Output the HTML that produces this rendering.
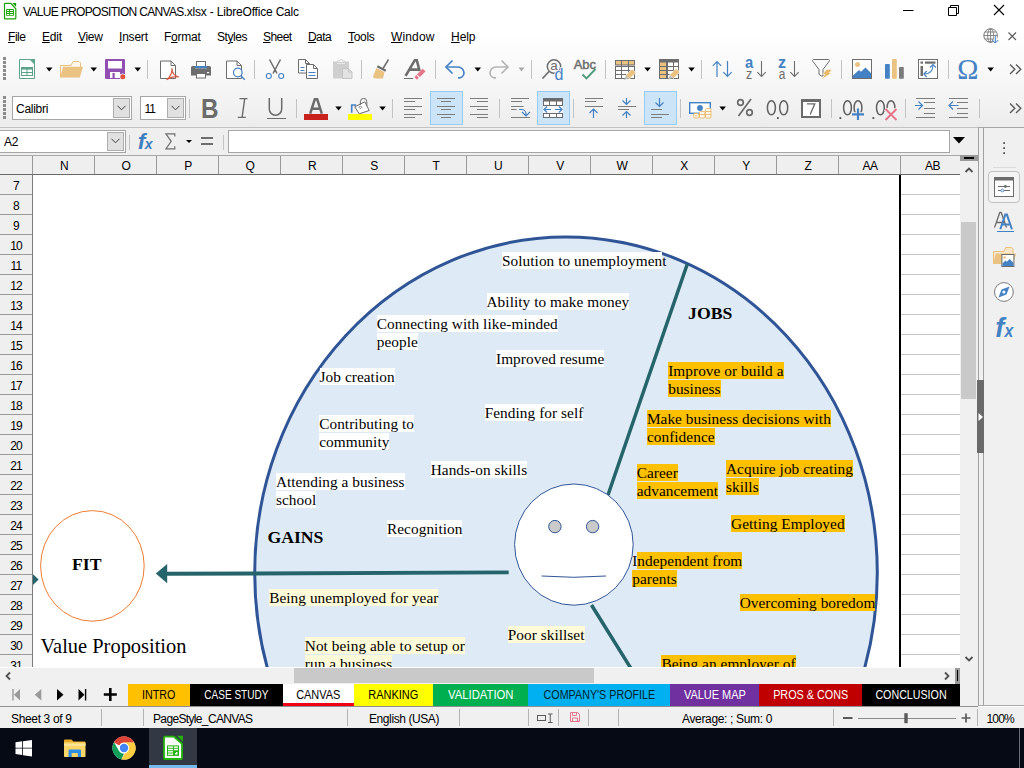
<!DOCTYPE html>
<html lang="en">
<head>
<meta charset="utf-8">
<title>VALUE PROPOSITION CANVAS.xlsx - LibreOffice Calc</title>
<style>
*{box-sizing:border-box;margin:0;padding:0}
html,body{width:1024px;height:768px;overflow:hidden;background:#fff}
body{position:relative;font-family:"Liberation Sans",sans-serif;font-size:12px;color:#000}
.abs{position:absolute}
.t{position:absolute;white-space:nowrap;line-height:14px;height:14px}
u{text-decoration:underline;text-underline-offset:1px}
svg{position:absolute;overflow:visible}
#titlebar{position:absolute;left:0;top:0;width:1024px;height:24px;background:#fff}
#menubar{position:absolute;left:0;top:24px;width:1024px;height:26px;background:linear-gradient(#fff 0%,#fff 40%,#fcfcfc 100%)}
#toolbars{position:absolute;left:0;top:50px;width:1024px;height:78px;background:linear-gradient(#fcfcfc 0%,#f8f8f8 30%,#f2f2f2 70%,#ececec 100%)}
#formulabar{position:absolute;left:0;top:127px;width:978px;height:28px;background:#efefef;border-top:1px solid #c2c2c2}
#sheet{position:absolute;left:0;top:155px;width:960px;height:512px;background:#fff;overflow:hidden}
#colhdr{position:absolute;left:0;top:0;width:960px;height:20px;background:#efefef;border-top:1px solid #a8a8a8;border-bottom:1px solid #6a6a6a}
.ch{position:absolute;top:0;height:18px;width:62px;border-left:1px solid #9a9a9a;text-align:center;line-height:20px;font-size:12px;padding-left:1px;letter-spacing:-0.5px}
#rowhdr{position:absolute;left:0;top:20px;width:33px;height:492px;background:#efefef;border-right:1px solid #7c7c7c}
.rh{position:absolute;left:0;width:32px;height:20px;border-bottom:1px solid #9a9a9a;text-align:center;line-height:23px;font-size:12px;letter-spacing:-0.8px}
#cells{position:absolute;left:33px;top:20px;width:927px;height:492px;background:#fff;overflow:hidden}
.serif{font-family:"Liberation Serif",serif}
.sep{position:absolute;width:1px;background:#c4c4c4}
.dd{position:absolute;width:0;height:0;border-left:3.5px solid transparent;border-right:3.5px solid transparent;border-top:4px solid #000}
.hl{position:absolute;background:#cde4f7;border:1px solid #92c0e8}
.grip{position:absolute;width:4px;background-image:repeating-linear-gradient(#8c8c8c 0,#8c8c8c 2px,transparent 2px,transparent 4px)}
.lab{position:absolute;white-space:nowrap;font-family:"Liberation Serif",serif;font-size:15.3px;line-height:18px;color:#000;letter-spacing:0.06px}
.lab span{background:#fff}
.lab.y span{background:#fffbd9}
.lab.o span{background:#ffc000}
.hd{position:absolute;white-space:nowrap;font-family:"Liberation Serif",serif;font-weight:bold;font-size:17.7px;line-height:20px}
.tab{position:absolute;top:684px;height:22px;text-align:center;line-height:23px;font-size:12px;white-space:nowrap}
.sb{position:absolute;top:712px;white-space:nowrap;line-height:14px}
</style>
</head>
<body>
<div id="titlebar">
<svg style="left:0;top:0" width="20" height="24" viewBox="0 0 20 24">
<path d="M5.100 3.400h5.700l5 5.400v9.400a0.600 0.600 0 0 1-0.600 0.600h-10.100a0.600 0.600 0 0 1-0.600-0.600v-14.200a0.600 0.600 0 0 1 0.600-0.600z" fill="#fff" stroke="#18a303" stroke-width="1.200"/>
<path d="M12.200 2.900h3.900v4z" fill="#18a303"/>
<rect x="6.100" y="8.900" width="7.800" height="6.900" rx="0.500" fill="#18a303"/>
<path d="M7 10.500h2.100M9.900 10.500h3.100M7 12.500h2.100M9.900 12.500h3.100M7 14.500h2.100M9.900 14.500h3.100" stroke="#fff" stroke-width="1"/>
</svg>
<div class="t" style="left:23px;top:5px;letter-spacing:-0.19px"><span style="letter-spacing:-0.68px">VALUE PROPOSITION CANVAS</span>.xlsx - LibreOffice Calc</div>
<svg style="left:903px;top:4px" width="104" height="14" viewBox="0 0 104 14">
<path d="M0 6.5h10.5" stroke="#000" stroke-width="1"/>
<path d="M45.500 3.500h8v8h-8z M47.500 3.500v-2h8v8h-2" fill="none" stroke="#000" stroke-width="1"/>
<path d="M91 1l10 10M101 1l-10 10" stroke="#000" stroke-width="1.100"/>
</svg>
</div>
<div id="menubar">
<div class="t" style="left:8px;top:6px;letter-spacing:-0.46px"><u>F</u>ile</div>
<div class="t" style="left:42px;top:6px;letter-spacing:-0.23px"><u>E</u>dit</div>
<div class="t" style="left:78px;top:6px;letter-spacing:-0.32px"><u>V</u>iew</div>
<div class="t" style="left:119px;top:6px;letter-spacing:-0.21px"><u>I</u>nsert</div>
<div class="t" style="left:164px;top:6px;letter-spacing:-0.25px">F<u>o</u>rmat</div>
<div class="t" style="left:217px;top:6px;letter-spacing:-0.45px">St<u>y</u>les</div>
<div class="t" style="left:263px;top:6px;letter-spacing:-0.57px"><u>S</u>heet</div>
<div class="t" style="left:308px;top:6px;letter-spacing:-0.59px"><u>D</u>ata</div>
<div class="t" style="left:348px;top:6px;letter-spacing:-0.3px"><u>T</u>ools</div>
<div class="t" style="left:391px;top:6px;letter-spacing:0.14px"><u>W</u>indow</div>
<div class="t" style="left:451px;top:6px;letter-spacing:-0.05px"><u>H</u>elp</div>
<svg style="left:983px;top:4px" width="34" height="18" viewBox="0 0 34 18">
<circle cx="7.600" cy="7.500" r="6.800" fill="none" stroke="#7a7a7a" stroke-width="1"/>
<ellipse cx="7.600" cy="7.500" rx="3" ry="6.800" fill="none" stroke="#7a7a7a" stroke-width="0.900"/>
<path d="M0.800 7.500h13.600M2 4h11.200M2 11h11.200M7.600 0.700v13.600" stroke="#7a7a7a" stroke-width="0.900"/>
<path d="M12.300 8v7" stroke="#fff" stroke-width="3"/>
<path d="M12.300 8v7M9.300 12l3 3 3-3" fill="none" stroke="#3a7fc4" stroke-width="1"/>
<path d="M25.500 4.500l7.500 7.500M33 4.500l-7.500 7.500" stroke="#5a5a5a" stroke-width="1.100"/>
</svg>
</div>
<div id="toolbars">
<svg style="left:0;top:0" width="1024" height="78" viewBox="0 50 1024 78" font-family="Liberation Sans,sans-serif">
<!-- grips -->
<g fill="#8c8c8c">
<path d="M3 57h3v3h-3zM3 61h3v3h-3zM3 65h3v3h-3zM3 69h3v3h-3zM3 73h3v3h-3zM3 77h3v3h-3z"/>
<path d="M3 96h3v3h-3zM3 100h3v3h-3zM3 104h3v3h-3zM3 108h3v3h-3zM3 112h3v3h-3zM3 116h3v3h-3z"/>
</g>
<!-- separators row1 -->
<g stroke="#c3c3c3" stroke-width="1">
<path d="M147.5 60v19M254.5 60v19M361.5 60v19M435.5 60v19M531.5 60v19M605.5 60v19M701.5 60v19M841.5 60v19M948.5 60v19"/>
<path d="M189.5 99v19M296.5 99v19M392.5 99v19M499.5 99v19M573.5 99v19M680.5 99v19M831.5 99v19M905.5 99v19M979.5 99v19"/>
</g>
<!-- dropdown arrows -->
<g fill="#000">
<path d="M46 67.5h6.5l-3.25 4zM90.5 67.5h6.5l-3.25 4zM134.5 67.5h6.5l-3.25 4zM474.5 67.5h6.5l-3.25 4zM644.3 67.5h6.5l-3.25 4zM688.3 67.5h6.5l-3.25 4zM987.4 67.5h6.5l-3.25 4z"/>
<path d="M335.3 106.5h6.5l-3.25 4zM379.3 106.5h6.5l-3.25 4zM719.4 106.5h6.5l-3.25 4z"/>
</g>
<path d="M518.5 67.5h6l-3 4z" fill="#a8a8a8"/>
<!-- New spreadsheet -->
<g transform="translate(19,59)">
<path d="M0.5 0.5h10.5l4.5 4.5v14.5h-15z" fill="#fff" stroke="#5ea387" stroke-width="1"/>
<path d="M10.5 0l5.5 5.5v-5.5z" fill="#5ea387"/>
<rect x="2.5" y="8.5" width="11" height="8" fill="#fff" stroke="#5ea387" stroke-width="1"/>
<rect x="2" y="8" width="12" height="2.6" fill="#5ea387"/>
<path d="M2.5 13.5h11M8 10v6.5" stroke="#5ea387" stroke-width="1"/>
</g>
<!-- Open -->
<g transform="translate(60,61)">
<path d="M0.5 16V4.5h10.5l2-4h6l1.500 1.500v4" fill="#fdf8ee" stroke="#e9c17f" stroke-width="1"/>
<path d="M0 16.500l3.200-10.700h19.800l-3.200 10.700z" fill="#eac282"/>
</g>
<!-- Save -->
<g transform="translate(105,59)">
<path d="M0 1a1 1 0 0 1 1-1h18a1 1 0 0 1 1 1v18a1 1 0 0 1-1 1h-18a1 1 0 0 1-1-1z" fill="#9150b1"/>
<rect x="3" y="2" width="14" height="7.5" fill="#fff"/>
<rect x="5" y="13" width="10" height="6" fill="#fff"/>
<rect x="7.5" y="14" width="2.2" height="5" fill="#9150b1"/>
<circle cx="17.6" cy="17.6" r="3.1" fill="#f9f4fb"/>
<circle cx="17.8" cy="17.8" r="2.5" fill="#e0533a"/>
</g>
<!-- PDF -->
<g transform="translate(160,60.5)">
<path d="M0.5 0.5h10.5l4.5 4.5v13h-15z" fill="#fff" stroke="#6d6d6d" stroke-width="1"/>
<path d="M11 0.5v4.5h4.5" fill="none" stroke="#6d6d6d" stroke-width="1"/>
<path d="M7 19c3-2.500 5-7 5-11c0 4.500 2.500 7.500 6.500 8.500c-4.500-1-8.500 0.500-11.500 2.500z" fill="none" stroke="#d65a44" stroke-width="1.2" stroke-linejoin="round"/>
</g>
<!-- Print -->
<g transform="translate(191,61)">
<rect x="5.500" y="0.500" width="9" height="6" fill="#fff" stroke="#6d6d6d" stroke-width="1"/>
<rect x="4" y="5" width="12" height="2.500" fill="#4582c3"/>
<path d="M0 6.500a1.500 1.500 0 0 1 1.500-1.500h2.500v2.500h12v-2.500h2.500a1.500 1.500 0 0 1 1.500 1.500v8h-20z" fill="#6d6d6d"/>
<rect x="5.500" y="12.500" width="9" height="4.500" fill="#fff" stroke="#6d6d6d" stroke-width="1"/>
<rect x="16" y="11" width="2.200" height="1.200" fill="#fff"/>
</g>
<!-- Preview -->
<g transform="translate(226,60.5)">
<path d="M0.5 0.5h10.5l4.5 4.5v13h-15z" fill="#fff" stroke="#6d6d6d" stroke-width="1"/>
<path d="M11 0.5v4.500h4.500" fill="none" stroke="#6d6d6d" stroke-width="1"/>
<circle cx="11.800" cy="12" r="4.300" fill="#fff" stroke="#4582c3" stroke-width="1.200"/>
<path d="M14.800 15.200l4 4" stroke="#4582c3" stroke-width="1.300"/>
</g>
<!-- Cut -->
<g transform="translate(266,59)" fill="none">
<path d="M3.500 0.500l7.500 14M14.500 0.500l-7.500 14" stroke="#6d6d6d" stroke-width="1.500"/>
<path d="M9 9.500l-1.800 3.500h3.600z" fill="#6d6d6d"/>
<circle cx="2.800" cy="17" r="2.500" stroke="#4582c3" stroke-width="1.100"/>
<circle cx="15.200" cy="17" r="2.500" stroke="#4582c3" stroke-width="1.100"/>
</g>
<!-- Copy -->
<g transform="translate(298,59)">
<path d="M0.500 0.500h7l4 4v9.500h-11z" fill="#fff" stroke="#6d6d6d" stroke-width="1"/>
<path d="M7.500 0.500v4h4" fill="none" stroke="#6d6d6d" stroke-width="1"/>
<path d="M2.500 8.500h4M2.500 11.500h4" stroke="#4582c3" stroke-width="1"/>
<path d="M8.500 5.500h7l4 4v10h-11z" fill="#fff" stroke="#6d6d6d" stroke-width="1"/>
<path d="M15.500 5.500v4h4" fill="none" stroke="#6d6d6d" stroke-width="1"/>
<path d="M10.500 13.500h7M10.500 16.500h7" stroke="#4582c3" stroke-width="1"/>
</g>
<!-- Paste (disabled) -->
<g transform="translate(333,59)">
<path d="M0 2.500h4v2h8v-2h4v17h-16z" fill="#cfcfcf"/>
<path d="M4.500 3.500v-1.500h2a1.500 1.500 0 0 1 3 0h2v1.500z" fill="none" stroke="#cfcfcf" stroke-width="1"/>
<path d="M9.500 9.500h6l3.500 3.500v6.500h-9.500z" fill="#e3e3e3" stroke="#c4c4c4" stroke-width="1"/>
<path d="M15.500 9.500v3.500h3.500" fill="none" stroke="#c4c4c4" stroke-width="1"/>
</g>
<!-- Clone formatting brush -->
<g transform="translate(373,59)">
<path d="M15.500 0.500l-5.500 9" stroke="#6d6d6d" stroke-width="1.500"/>
<path d="M4.800 6.200l8.500 4.500-1 2-8.500-4.500z" fill="#6d6d6d"/>
<path d="M3.500 9l8 4.300-1.500 6.200h-7.500c-2 0-3-1.500-2-3.500z" fill="#eac282"/>
</g>
<!-- Clear formatting -->
<g transform="translate(404,59)">
<path d="M1.600 16.800l9.200-15.600h2l2.800 10.800M5.600 10.600h9.200" fill="none" stroke="#6d6d6d" stroke-width="2.600" stroke-linejoin="miter"/>
<path d="M0 19.500h9.200" stroke="#6d6d6d" stroke-width="1"/>
<path d="M12.900 15.400l5.600-5.650 3.100 2.500-5.600 5.650z" fill="#e6758a"/>
<path d="M10.400 17.900l2.100-1.900 2.250 3.100-1.850 1.650z" fill="#e6758a"/>
</g>
<!-- Undo -->
<g transform="translate(445,60)" fill="none" stroke="#4582c3" stroke-width="1.700">
<path d="M7.500 0.500l-6.500 6.500 6.500 6.500"/>
<path d="M1.500 7h11.500a6 6 0 0 1 6 6a5 5 0 0 1-5 4.800h-1"/>
</g>
<!-- Redo (disabled) -->
<g transform="translate(489,60)" fill="none" stroke="#b4b4b4" stroke-width="1.700">
<path d="M12.500 0.500l6.500 6.500-6.500 6.500"/>
<path d="M18.500 7h-11.500a6 6 0 0 0-6 6a5 5 0 0 0 5 4.800h1"/>
</g>
<!-- Find & Replace -->
<g transform="translate(542,59)">
<circle cx="12" cy="7.500" r="6.700" fill="none" stroke="#6d6d6d" stroke-width="1.500"/>
<path d="M7 12.500l-6.500 7" stroke="#6d6d6d" stroke-width="1.700"/>
<text x="8.200" y="11" font-size="13.500" fill="#6d6d6d">a</text>
<text x="12.400" y="20.700" font-size="16" fill="#4582c3" stroke="#f6f6f6" stroke-width="1.600" paint-order="stroke">d</text>
</g>
<!-- Spelling -->
<g transform="translate(574,59)">
<text x="-0.300" y="9.800" font-size="12.300" fill="#6d6d6d" stroke="#6d6d6d" stroke-width="0.450" textLength="22.300" lengthAdjust="spacingAndGlyphs">Abc</text>
<path d="M8.500 15.500l4 4 9-9.500" fill="none" stroke="#4f9d7d" stroke-width="1.900"/>
</g>
<!-- Row autoformat -->
<g transform="translate(615,60)">
<rect x="0.500" y="0.500" width="19" height="4.500" fill="#eac282" stroke="#6d6d6d" stroke-width="1"/>
<rect x="0.500" y="6.500" width="19" height="12" fill="#fff" stroke="#6d6d6d" stroke-width="1"/>
<path d="M6.500 0.500v18M13.500 0.500v18M0.500 10.500h19M0.500 14.500h19" stroke="#6d6d6d" stroke-width="1"/>
<path d="M17 9l4 3.500-6.500 6.500-4-3.500z" fill="#eac282" stroke="#fff" stroke-width="0.600"/>
<path d="M11 15.500l3 3-5 1.500z" fill="#bdbdbd"/>
</g>
<!-- Column autoformat -->
<g transform="translate(659,59)">
<rect x="0.500" y="0.500" width="7" height="19" fill="#eac282" stroke="#6d6d6d" stroke-width="1"/>
<rect x="8.500" y="0.500" width="11" height="19" fill="#fff" stroke="#6d6d6d" stroke-width="1"/>
<rect x="0" y="0" width="7.800" height="3.500" fill="#6d6d6d"/>
<rect x="9" y="0" width="11" height="3.500" fill="#6d6d6d"/>
<path d="M0.500 7.500h19M0.500 11.500h19M0.500 15.500h19M14.500 3v16" stroke="#6d6d6d" stroke-width="1"/>
<path d="M17 9.500l4 3.500-6.500 6.500-4-3.500z" fill="#eac282" stroke="#fff" stroke-width="0.600"/>
<path d="M11 16l3 3-5 1.500z" fill="#bdbdbd"/>
</g>
<!-- Sort -->
<g transform="translate(712,60)" fill="none" stroke="#4582c3" stroke-width="1.200">
<path d="M5 17v-15.500M0.800 5.800l4.200-4.300 4.200 4.300"/>
<path d="M15.500 1v15.500M11.300 12.200l4.200 4.300 4.200-4.300"/>
</g>
<!-- Sort asc -->
<g transform="translate(745,59)">
<text x="0" y="9.100" font-size="17" font-weight="bold" fill="#4582c3" textLength="8.200" lengthAdjust="spacingAndGlyphs">a</text>
<text x="1" y="19.700" font-size="14" fill="#6d6d6d" textLength="6.200" lengthAdjust="spacingAndGlyphs">z</text>
<path d="M16.500 2v15.500M12.300 13.200l4.200 4.300 4.200-4.300" fill="none" stroke="#6d6d6d" stroke-width="1.100"/>
</g>
<!-- Sort desc -->
<g transform="translate(778,59)">
<text x="0" y="9.100" font-size="17" font-weight="bold" fill="#4582c3" textLength="8" lengthAdjust="spacingAndGlyphs">z</text>
<text x="0.700" y="19.700" font-size="14" fill="#6d6d6d" textLength="6.600" lengthAdjust="spacingAndGlyphs">a</text>
<path d="M16.500 2v15.500M12.300 13.200l4.200 4.300 4.200-4.300" fill="none" stroke="#6d6d6d" stroke-width="1.100"/>
</g>
<!-- AutoFilter -->
<g transform="translate(812,59)">
<path d="M1.500 0.500h15a1 1 0 0 1 0.800 1.600l-6.300 8.400v6.500h-1.500l-2.500-1.500v-5l-6.300-8.400a1 1 0 0 1 0.800-1.600z" fill="none" stroke="#6d6d6d" stroke-width="1"/>
<path d="M14.500 10.500h5.500l-3 3.500h2.500l-10 6.500 3.500-5h-2.500z" fill="#eab864" stroke="#f6f6f6" stroke-width="0.500"/>
</g>
<!-- Image -->
<g transform="translate(852,59)">
<rect x="0.500" y="0.500" width="19" height="19" fill="#fff" stroke="#6d6d6d" stroke-width="1"/>
<circle cx="5.500" cy="5.500" r="2.500" fill="#eac282"/>
<path d="M1 19v-2.500l6-5.500 2 1.800 4.500-4.300 5.500 5.500v5z" fill="#4582c3"/>
</g>
<!-- Chart -->
<g transform="translate(885,59)">
<rect x="0" y="5" width="4.800" height="14.800" rx="0.800" fill="#4582c3"/>
<rect x="7" y="0" width="4.800" height="19.800" rx="0.800" fill="#eac282"/>
<rect x="14" y="8" width="4.800" height="11.800" rx="0.800" fill="#7a7a7a"/>
</g>
<!-- Pivot table -->
<g transform="translate(918,59)">
<rect x="0.500" y="0.500" width="19" height="19" fill="#fff" stroke="#6d6d6d" stroke-width="1"/>
<rect x="2.500" y="2.500" width="2.500" height="2.200" fill="#6d6d6d"/>
<rect x="7" y="2.500" width="10.500" height="2.200" fill="#6d6d6d"/>
<rect x="2.500" y="7" width="2.500" height="10" fill="#6d6d6d"/>
<path d="M15 6c0 6-3 9-9 9" fill="none" stroke="#4582c3" stroke-width="1.100"/>
<path d="M12 8.500l3-3 3 3M8.800 12l-3 3 3 3" fill="none" stroke="#4582c3" stroke-width="1.100"/>
</g>
<!-- Omega -->
<text x="957.300" y="78.500" font-family="Liberation Serif,serif" font-size="28.500" fill="#4582c3">Ω</text>
<!-- chevrons -->
<g fill="none" stroke="#5a5a5a" stroke-width="1.400">
<path d="M1010 64.500l4.800 4.700-4.800 4.700M1016 64.500l4.800 4.700-4.800 4.700"/>
<path d="M1010 103.500l4.800 4.700-4.800 4.700M1016 103.500l4.800 4.700-4.800 4.700"/>
</g>
<!-- highlights for active buttons -->
<g fill="#cce4f7" stroke="#98ccf5" stroke-width="1">
<rect x="430.500" y="91.500" width="32" height="33"/>
<rect x="537.500" y="91.500" width="32" height="33"/>
<rect x="644.500" y="91.500" width="32" height="33"/>
</g>
<!-- Bold Italic Underline -->
<text x="201" y="118" font-size="27" font-weight="bold" fill="#6b6b6b" textLength="17.500" lengthAdjust="spacingAndGlyphs">B</text>
<path d="M239.500 98.600h8M237.800 117.400h8M244.700 98.600l-2.600 18.800" fill="none" stroke="#6b6b6b" stroke-width="1.400"/>
<path d="M269.300 98v11a6.200 6.200 0 0 0 12.400 0v-11" fill="none" stroke="#6b6b6b" stroke-width="1.500"/>
<path d="M267 118.500h19" stroke="#6b6b6b" stroke-width="1"/>
<!-- Font color -->
<path d="M310.200 113.600l4.600-14.400h2.400l4.600 14.400M312.300 108.800h7.400" fill="none" stroke="#6b6b6b" stroke-width="2.500"/>
<rect x="304" y="114" width="24" height="6" fill="#c9211e"/>
<!-- Background color -->
<path d="M351.700 112.800v-7.800h4.500" fill="none" stroke="#4582c3" stroke-width="1.600"/>
<path d="M354.800 106.800l10-5 4.400 8.700-10 3.300z" fill="#fff" stroke="#6b6b6b" stroke-width="1"/>
<path d="M360.400 104.800v-3.200a3.200 3.200 0 0 1 6.400 0v4.600" fill="none" stroke="#6b6b6b" stroke-width="1"/>
<path d="M360.400 105.800l1.500 1.500-1.500 1.500-1.500-1.500z" fill="#fff" stroke="#6b6b6b" stroke-width="0.800"/>
<rect x="348" y="114" width="24" height="6" fill="#ffff00"/>
<!-- align left/center/right -->
<g stroke="#7d7d7d" stroke-width="1">
<path d="M404 98.500h18M404 101.500h11M404 106.500h18M404 109.500h11M404 114.500h18M404 117.500h11"/>
<path d="M437 98.500h18M441 101.500h10M437 106.500h18M441 109.500h10M437 114.500h18M441 117.500h10"/>
<path d="M470 98.500h18M477 101.500h11M470 106.500h18M477 109.500h11M470 114.500h18M477 117.500h11"/>
<!-- wrap -->
<path d="M511 98.500h18M511 101.500h11M511 106.500h12.500M511 109.500h5.500M511 117.500h19"/>
<!-- align top -->
<path d="M585 98.500h18M585 101.500h11M585 106.500h18"/>
<!-- center vert -->
<path d="M618 106.500h18M618 109.500h11"/>
<!-- bottom -->
<path d="M651 109.500h11M651 114.500h18M651 117.500h11"/>
<!-- indent inc -->
<path d="M916 98.500h19M924 102.500h11M924 108.500h11M924 113.500h11M916 117.500h19"/>
<!-- indent dec -->
<path d="M949 98.500h19M957 102.500h11M957 108.500h11M957 113.500h11M949 117.500h19"/>
</g>
<g fill="none" stroke="#4582c3" stroke-width="1.200">
<path d="M519 109.500h2.500a4.500 4.500 0 0 1 4.500 4.500v1.500M522 112l4 4 4-4"/>
<path d="M593.500 118v-9M589.500 113l4-4 4 4"/>
<path d="M626.500 98v6.500M622.500 100.500l4 4 4-4M626.500 118v-6.500M622.500 115.500l4-4 4 4"/>
<path d="M659.500 98v8.500M655.500 102.500l4 4 4-4"/>
<path d="M915 105.500h7.500M918.500 101.500l4 4-4 4"/>
<path d="M958.500 105.500h-9M953 101.500l-4 4 4 4"/>
</g>
<!-- merge cells -->
<g transform="translate(543,98)">
<rect x="0.500" y="0.500" width="19" height="19" fill="#fff" stroke="#6b6b6b" stroke-width="1"/>
<rect x="0" y="0" width="20" height="3.500" fill="#6b6b6b"/>
<path d="M0.500 7.500h19M0.500 15.500h19M6.500 3v4.500M13.500 3v4.500M6.500 15.500v4M13.500 15.500v4" stroke="#6b6b6b" stroke-width="1"/>
<rect x="0" y="8" width="20" height="7" fill="#f4f9fe"/>
<path d="M1 11.500h7M12 11.500h7M4 8.500l-3 3 3 3M16 8.500l3 3-3 3" fill="none" stroke="#4582c3" stroke-width="1.200"/>
</g>
<!-- currency -->
<g transform="translate(689,102)">
<rect x="0.700" y="0.700" width="20.600" height="10.600" fill="#fff" stroke="#4582c3" stroke-width="1.400"/>
<circle cx="11" cy="6" r="2.900" fill="#4582c3"/>
<g fill="#fdf6e9" stroke="#e9b96e" stroke-width="0.900">
<rect x="16.500" y="6.500" width="5.500" height="9.500" rx="1"/>
<path d="M16.500 9.500h5.500M16.500 12.500h5.500"/>
<rect x="10.500" y="9.500" width="5.500" height="6.500" rx="1"/>
<path d="M10.500 12.500h5.500"/>
<rect x="4.500" y="11.500" width="5.500" height="4.500" rx="1.500"/>
<path d="M6 13.800h2.500"/>
</g>
</g>
<!-- percent -->
<g fill="none" stroke="#6b6b6b" stroke-width="1.700">
<circle cx="740.500" cy="102.500" r="2.800"/><circle cx="749.500" cy="112.500" r="2.800"/><path d="M751 99l-12.500 17"/>
</g>
<!-- 0.0 -->
<g fill="none" stroke="#626262" stroke-width="1.500">
<ellipse cx="771.400" cy="107.750" rx="4" ry="7.100"/><ellipse cx="783.700" cy="107.750" rx="4" ry="7.100"/>
<ellipse cx="847.500" cy="107.750" rx="3.900" ry="7.100"/>
<ellipse cx="858" cy="107.750" rx="3.900" ry="7.100"/>
<ellipse cx="880.400" cy="107.750" rx="3.900" ry="7.100"/>
<ellipse cx="891" cy="107.750" rx="3.900" ry="7.100"/>
</g>
<g fill="#3c3c3c"><rect x="777" y="117.200" width="1.700" height="1.700"/><rect x="839.500" y="117.200" width="1.700" height="1.700"/><rect x="872.500" y="117.200" width="1.700" height="1.700"/></g>
<!-- number 7 box -->
<rect x="802" y="100" width="18" height="17" fill="#fff" stroke="#6b6b6b" stroke-width="2"/>
<rect x="801" y="99" width="20" height="3" fill="#6b6b6b"/>
<path d="M807 103.800h7.800l-4.600 10.700" fill="none" stroke="#6b6b6b" stroke-width="1.300"/>
<!-- plus & x -->
<path d="M858 108.500v11.500M852 114.300h12" stroke="#f1f1f1" stroke-width="4.200" fill="none"/><path d="M858 108.500v11.500M852 114.300h12" stroke="#4582c3" stroke-width="2.200" fill="none"/>
<path d="M885.500 109l11 11M896.500 109l-11 11" stroke="#f1f1f1" stroke-width="4" fill="none"/><path d="M885.500 109l11 11M896.500 109l-11 11" stroke="#e6758a" stroke-width="2" fill="none"/>

</svg>
<div class="abs" style="left:12px;top:46px;width:120px;height:24px;background:#fff;border:1px solid #a6a6a6"></div>
<div class="abs" style="left:113px;top:48px;width:17px;height:20px;background:#e1e1e1;border:1px solid #adadad"></div>
<svg style="left:117px;top:55px" width="9" height="6" viewBox="0 0 9 6"><path d="M0.500 0.800l4 4 4-4" fill="none" stroke="#3c3c3c" stroke-width="1"/></svg>
<div class="t" style="left:16px;top:52px;letter-spacing:-0.28px">Calibri</div>
<div class="abs" style="left:140px;top:46px;width:46px;height:24px;background:#fff;border:1px solid #a6a6a6"></div>
<div class="abs" style="left:167px;top:48px;width:17px;height:20px;background:#e1e1e1;border:1px solid #adadad"></div>
<svg style="left:171px;top:55px" width="9" height="6" viewBox="0 0 9 6"><path d="M0.500 0.800l4 4 4-4" fill="none" stroke="#3c3c3c" stroke-width="1"/></svg>
<div class="t" style="left:144.500px;top:52px;letter-spacing:-1px">11</div>

</div>
<div id="formulabar">
<div class="abs" style="left:0;top:2px;width:126px;height:23px;background:#fff;border:1px solid #a6a6a6;border-left:0"></div>
<div class="abs" style="left:107px;top:4px;width:17px;height:19px;background:#e1e1e1;border:1px solid #adadad"></div>
<svg style="left:111px;top:10px" width="9" height="6" viewBox="0 0 9 6"><path d="M0.5 0.8l4 4 4-4" fill="none" stroke="#3c3c3c" stroke-width="1"/></svg>
<div class="t" style="left:4px;top:7px;letter-spacing:-0.3px">A2</div>
<div class="sep" style="left:129px;top:7px;height:15px"></div>
<svg style="left:137px;top:5px" width="17" height="18" viewBox="0 0 17 18" font-family="Liberation Sans,sans-serif" font-weight="bold" font-style="italic" fill="#3f7fbf"><text x="0.800" y="16.300" font-size="21.500" textLength="7.600" lengthAdjust="spacingAndGlyphs">f</text><text x="7.800" y="16.300" font-size="15" textLength="7.800" lengthAdjust="spacingAndGlyphs">x</text></svg>
<svg style="left:165px;top:5px" width="11" height="17" viewBox="0 0 11 17"><path d="M9.8 3.4V0.8H0.9L6.2 8.3L0.9 15.8H9.8V13.2" fill="none" stroke="#6e6e6e" stroke-width="1.2"/></svg>
<div class="dd" style="left:186px;top:12px;border-left-width:3px;border-right-width:3px;border-top-width:3.5px"></div>
<div class="abs" style="left:201px;top:9px;width:12px;height:2px;background:#6e6e6e"></div>
<div class="abs" style="left:201px;top:15px;width:12px;height:2px;background:#6e6e6e"></div>
<div class="sep" style="left:223px;top:7px;height:15px"></div>
<div class="abs" style="left:228px;top:2px;width:722px;height:23px;background:#fff;border:1px solid #a6a6a6"></div>
<svg style="left:953px;top:9px" width="12" height="7" viewBox="0 0 12 7"><path d="M0 0h12l-6 6.5z" fill="#000"/></svg>
</div>
<div id="sheet">
<div id="colhdr">
<div class="ch" style="left:32px;width:62px">N</div>
<div class="ch" style="left:94px;width:62px">O</div>
<div class="ch" style="left:156px;width:62px">P</div>
<div class="ch" style="left:218px;width:62px">Q</div>
<div class="ch" style="left:280px;width:62px">R</div>
<div class="ch" style="left:342px;width:62px">S</div>
<div class="ch" style="left:404px;width:62px">T</div>
<div class="ch" style="left:466px;width:62px">U</div>
<div class="ch" style="left:528px;width:62px">V</div>
<div class="ch" style="left:590px;width:62px">W</div>
<div class="ch" style="left:652px;width:62px">X</div>
<div class="ch" style="left:714px;width:62px">Y</div>
<div class="ch" style="left:776px;width:62px">Z</div>
<div class="ch" style="left:838px;width:62px">AA</div>
<div class="ch" style="left:900px;width:60px;padding-left:4px">AB</div>
</div>
<div id="rowhdr">
<div class="rh" style="top:0px">7</div>
<div class="rh" style="top:20px">8</div>
<div class="rh" style="top:40px">9</div>
<div class="rh" style="top:60px">10</div>
<div class="rh" style="top:80px">11</div>
<div class="rh" style="top:100px">12</div>
<div class="rh" style="top:120px">13</div>
<div class="rh" style="top:140px">14</div>
<div class="rh" style="top:160px">15</div>
<div class="rh" style="top:180px">16</div>
<div class="rh" style="top:200px">17</div>
<div class="rh" style="top:220px">18</div>
<div class="rh" style="top:240px">19</div>
<div class="rh" style="top:260px">20</div>
<div class="rh" style="top:280px">21</div>
<div class="rh" style="top:300px">22</div>
<div class="rh" style="top:320px">23</div>
<div class="rh" style="top:340px">24</div>
<div class="rh" style="top:360px">25</div>
<div class="rh" style="top:380px">26</div>
<div class="rh" style="top:400px">27</div>
<div class="rh" style="top:420px">28</div>
<div class="rh" style="top:440px">29</div>
<div class="rh" style="top:460px">30</div>
<div class="rh" style="top:480px">31</div>
</div>
<div id="cells">
<div class="abs" style="left:-33px;top:-175px;width:1024px;height:768px">
<svg style="left:0;top:0" width="1024" height="768" viewBox="0 0 1024 768">
<g stroke="#c6c6c6" stroke-width="1">
<path d="M901 194.5h59M901 214.5h59M901 234.5h59M901 254.5h59M901 274.5h59M901 294.5h59M901 314.5h59M901 334.5h59M901 354.5h59M901 374.5h59M901 394.5h59M901 414.5h59M901 434.5h59M901 454.5h59M901 474.5h59M901 494.5h59M901 514.5h59M901 534.5h59M901 554.5h59M901 574.5h59M901 594.5h59M901 614.5h59M901 634.5h59M901 654.5h59"/>
</g>
<rect x="899" y="175" width="2" height="500" fill="#000"/>
<ellipse cx="566" cy="573" rx="311.3" ry="336" fill="#deebf7" stroke="#2f5597" stroke-width="3"/>
<g stroke="#24646a" stroke-width="3.5" fill="none">
<path d="M687.3 264L608 495"/>
<path d="M591.5 605L640 683"/>
<path d="M508.7 572.4L166 573.8" stroke-width="3.9"/>
</g>
<path d="M155.8 573.6L167.2 564V583.3z" fill="#24646a"/>
<path d="M33 574.2L38.6 579.6L33 585z" fill="#24646a"/>
<ellipse cx="573.9" cy="544.6" rx="59.3" ry="60.6" fill="#fff" stroke="#2f5597" stroke-width="1"/>
<circle cx="554.9" cy="526.6" r="6.2" fill="#cacaca" stroke="#2f5597" stroke-width="1"/>
<circle cx="592.6" cy="526.6" r="6.2" fill="#cacaca" stroke="#2f5597" stroke-width="1"/>
<path d="M541.6 576Q573.8 578.6 606 576" fill="none" stroke="#2f5597" stroke-width="1"/>
<ellipse cx="92.4" cy="565.9" rx="51.8" ry="55.3" fill="#fff" stroke="#ed7d31" stroke-width="1"/>
</svg>
<div class="hd" style="left:72px;top:553.8px">FIT</div>
<div class="hd" style="left:267.4px;top:527.3px">GAINS</div>
<div class="hd" style="left:688.1px;top:302.9px">JOBS</div>
<div class="abs serif" style="left:40.6px;top:633.8px;font-size:20.45px;line-height:24px;white-space:nowrap">Value Proposition</div>
<div class="abs" style="left:501.8px;top:251.8px;width:160.4px;height:17px;background:#fff"></div><div class="lab" style="left:502px;top:252px">Solution to unemployment</div>
<div class="lab" style="left:486.5px;top:292.5px"><span>Ability to make money</span></div>
<div class="lab" style="left:376.8px;top:314.7px"><span>Connecting with like-minded</span><br><span>people</span></div>
<div class="lab" style="left:496px;top:350.2px"><span>Improved resume</span></div>
<div class="lab" style="left:319.6px;top:367.9px"><span>Job creation</span></div>
<div class="lab" style="left:484.7px;top:404px"><span>Fending for self</span></div>
<div class="lab" style="left:319.2px;top:414.7px"><span>Contributing to</span><br><span>community</span></div>
<div class="lab" style="left:430.7px;top:461px"><span>Hands-on skills</span></div>
<div class="lab" style="left:275.9px;top:473px"><span>Attending a business</span><br><span>school</span></div>
<div class="lab" style="left:387px;top:520px"><span>Recognition</span></div>
<div class="lab y" style="left:269.2px;top:589px"><span>Being unemployed for year</span></div>
<div class="lab y" style="left:304.8px;top:637px"><span>Not being able to setup or</span><br><span>run a business</span></div>
<div class="lab y" style="left:507.7px;top:625.7px"><span>Poor skillset</span></div>
<div class="lab o" style="left:668.2px;top:361.5px"><span>Improve or build a</span><br><span>business</span></div>
<div class="lab o" style="left:646.9px;top:410.2px"><span>Make business decisions with</span><br><span>confidence</span></div>
<div class="lab o" style="left:636.7px;top:463.8px"><span>Career</span><br><span>advancement</span></div>
<div class="lab o" style="left:726px;top:460px"><span>Acquire job creating</span><br><span>skills</span></div>
<div class="lab o" style="left:731.1px;top:515.1px"><span>Getting Employed</span></div>
<div class="lab o" style="left:632.2px;top:551.5px">I<span>ndependent from</span><br><span>parents</span></div>
<div class="lab o" style="left:739.7px;top:593.9px"><span>Overcoming boredom</span></div>
<div class="lab o" style="left:661.4px;top:655px"><span>Being an employer of</span></div>
</div>

</div>
</div>
<!-- vertical scrollbar -->
<div class="abs" style="left:960px;top:155px;width:18px;height:530px;background:#f0f0f0"></div>
<div class="abs" style="left:960px;top:155px;width:18px;height:6px;background:#9a9a9a"></div>
<div class="abs" style="left:964px;top:157px;width:10px;height:2px;background:#000"></div>
<svg style="left:964px;top:166px" width="10" height="8" viewBox="0 0 10 8"><path d="M1.500 6l3.500-3.500 3.500 3.500" fill="none" stroke="#505050" stroke-width="1.800"/></svg>
<div class="abs" style="left:961px;top:222px;width:15px;height:177px;background:#c9c9c9"></div>
<svg style="left:964px;top:655px" width="10" height="8" viewBox="0 0 10 8"><path d="M1.500 2l3.500 3.500 3.500-3.500" fill="none" stroke="#505050" stroke-width="1.800"/></svg>
<!-- horizontal scrollbar -->
<div id="hscroll" class="abs" style="left:0;top:668px;width:960px;height:16px;background:#f0f0f0"></div>
<div class="abs" style="left:294px;top:668px;width:300px;height:15px;background:#c9c9c9"></div>
<svg style="left:4px;top:671px" width="8" height="10" viewBox="0 0 8 10"><path d="M6 1.500l-3.500 3.500 3.500 3.500" fill="none" stroke="#505050" stroke-width="1.800"/></svg>
<svg style="left:943px;top:671px" width="8" height="10" viewBox="0 0 8 10"><path d="M2 1.500l3.500 3.500-3.500 3.500" fill="none" stroke="#505050" stroke-width="1.800"/></svg>
<div class="abs" style="left:955px;top:668px;width:5px;height:16px;background:#9a9a9a"></div>
<div class="abs" style="left:957px;top:670px;width:1px;height:11px;background:#000"></div>
<!-- tab bar -->
<div id="tabs" class="abs" style="left:0;top:684px;width:978px;height:23px;background:#f0f0f0;border-bottom:1px solid #8f8f8f"></div>
<svg style="left:0;top:684px" width="128" height="22" viewBox="0 684 128 22">
<path d="M13 689v11.500" stroke="#9a9a9a" stroke-width="1.400"/><path d="M20 689v11.500l-6-5.750z" fill="#9a9a9a"/>
<path d="M41.300 689v11.500l-6.500-5.750z" fill="#9a9a9a"/>
<path d="M57 689v11.500l6.500-5.750z" fill="#000"/>
<path d="M78.500 689v11.500l6-5.750z" fill="#000"/><path d="M85.600 689v11.500" stroke="#000" stroke-width="1.400"/>
<path d="M110.300 688v13M103.800 694.500h13" stroke="#000" stroke-width="2.600"/>
</svg>
<div class="tab" style="left:128px;width:62px;background:#ffc000;color:#000"><span style="display:inline-block;transform:scaleX(0.89)">INTRO</span></div>
<div class="tab" style="left:190px;width:93px;background:#000;color:#fff"><span style="display:inline-block;transform:scaleX(0.835)">CASE STUDY</span></div>
<div class="tab" style="left:283px;width:71px;background:#fff;color:#000;border-bottom:3px solid #f00014;line-height:23px"><span style="display:inline-block;transform:scaleX(0.912)">CANVAS</span></div>
<div class="tab" style="left:354px;width:79px;background:#ffff00;color:#000"><span style="display:inline-block;transform:scaleX(0.914)">RANKING</span></div>
<div class="tab" style="left:433px;width:95px;background:#00b050;color:#fff"><span style="display:inline-block;transform:scaleX(0.94)">VALIDATION</span></div>
<div class="tab" style="left:528px;width:142px;background:#00b0f0;color:#06202f"><span style="display:inline-block;transform:scaleX(0.895)">COMPANY'S PROFILE</span></div>
<div class="tab" style="left:670px;width:89px;background:#7030a0;color:#fff"><span style="display:inline-block;transform:scaleX(0.914)">VALUE MAP</span></div>
<div class="tab" style="left:759px;width:103px;background:#c00000;color:#fff"><span style="display:inline-block;transform:scaleX(0.9)">PROS &amp; CONS</span></div>
<div class="tab" style="left:862px;width:98px;background:#000;color:#fff"><span style="display:inline-block;transform:scaleX(0.89)">CONCLUSION</span></div>
<!-- status bar -->
<div id="statusbar" class="abs" style="left:0;top:707px;width:1024px;height:21px;background:#f0f0f0"></div>
<div class="sep" style="left:101px;top:709px;height:17px;background:#b4b4b4"></div>
<div class="sep" style="left:143px;top:709px;height:17px;background:#b4b4b4"></div>
<div class="sep" style="left:347px;top:709px;height:17px;background:#b4b4b4"></div>
<div class="sep" style="left:459px;top:709px;height:17px;background:#b4b4b4"></div>
<div class="sep" style="left:528px;top:709px;height:17px;background:#b4b4b4"></div>
<div class="sep" style="left:558px;top:709px;height:17px;background:#b4b4b4"></div>
<div class="sep" style="left:588px;top:709px;height:17px;background:#b4b4b4"></div>
<div class="sep" style="left:618px;top:709px;height:17px;background:#b4b4b4"></div>
<div class="sep" style="left:833px;top:709px;height:17px;background:#b4b4b4"></div>
<div class="sep" style="left:977px;top:709px;height:17px;background:#b4b4b4"></div>
<div class="sb" style="left:11px;letter-spacing:-0.35px">Sheet 3 of 9</div>
<div class="sb" style="left:153px;letter-spacing:-0.65px">PageStyle_CANVAS</div>
<div class="sb" style="left:369px;letter-spacing:-0.41px">English (USA)</div>
<div class="sb" style="left:682px;letter-spacing:-0.34px">Average: ; Sum: 0</div>
<div class="sb" style="left:986.500px;letter-spacing:-0.8px">100%</div>
<svg style="left:536px;top:712px" width="48" height="12" viewBox="536 712 48 12">
<rect x="537.500" y="715.500" width="8" height="5" fill="none" stroke="#5a5a5a" stroke-width="1"/>
<path d="M548 714h4.500M548 722.500h4.500M550.250 714v8.500" stroke="#5a5a5a" stroke-width="1" fill="none"/>
<path d="M570.500 712.500h7l2 2v7h-9z" fill="none" stroke="#e6758a" stroke-width="1"/>
<path d="M572.500 712.500v3h4v-3M572.500 721.500v-3.500h5v3.500" fill="none" stroke="#e6758a" stroke-width="1"/>
</svg>
<svg style="left:840px;top:710px" width="136" height="16" viewBox="840 710 136 16">
<path d="M843 718h9.500" stroke="#5a5a5a" stroke-width="2"/>
<path d="M858 718.500h98" stroke="#8a8a8a" stroke-width="1"/>
<rect x="904.300" y="713.200" width="3.400" height="10" fill="#5a5a5a"/>
<path d="M961.500 718h9M966 713.500v9" stroke="#5a5a5a" stroke-width="1.700"/>
</svg>
<div id="sidebar" class="abs" style="left:978px;top:127px;width:46px;height:579px;background:#f0f0f0;border-bottom:1px solid #a8a8a8;border-top:1px solid #a6a6a6"></div>
<div class="abs" style="left:978px;top:128px;width:1px;height:577px;background:#a0a0a0"></div>
<div class="abs" style="left:983px;top:128px;width:1px;height:577px;background:#a0a0a0"></div>
<div class="abs" style="left:977px;top:380px;width:7px;height:73px;background:#6a6a6a"></div>
<svg style="left:978px;top:412px" width="6" height="10" viewBox="0 0 6 10"><path d="M0.500 1l4.500 4-4.500 4z" fill="#fff"/></svg>
<svg style="left:984px;top:128px" width="40" height="220" viewBox="984 128 40 220" font-family="Liberation Sans,sans-serif">
<g fill="#5a5a5a"><rect x="1003.200" y="142.200" width="1.800" height="1.800"/><rect x="1003.200" y="147.200" width="1.800" height="1.800"/><rect x="1003.200" y="152.200" width="1.800" height="1.800"/></g>
<path d="M993 167.500h23" stroke="#dcdcdc" stroke-width="1"/>
<rect x="988.500" y="171.500" width="31" height="31" rx="3.500" fill="#f4f4f4" stroke="#c2c2c2" stroke-width="1"/>
<rect x="994.500" y="177.500" width="19" height="19" fill="#fff" stroke="#6b6b6b" stroke-width="1"/>
<rect x="994" y="177" width="20" height="3.500" fill="#6b6b6b"/>
<path d="M998 186.500h12M998 190.500h12" stroke="#6b6b6b" stroke-width="1"/>
<circle cx="1005.400" cy="186.500" r="1.400" fill="#6b6b6b"/>
<circle cx="1002.300" cy="190.500" r="1.400" fill="#fff" stroke="#4582c3" stroke-width="0.900"/>
<!-- styles -->
<path d="M994.500 227.500l5.300-15h1.400l5.300 15M996.500 222.500h8" fill="none" stroke="#6b6b6b" stroke-width="1.300"/>
<path d="M1000.300 229.200l5-14.600h1.600l5 14.600M1002.600 224.400h7.200" fill="none" stroke="#4582c3" stroke-width="2"/>
<path d="M997 231.500h17" stroke="#4582c3" stroke-width="1"/>
<!-- gallery -->
<path d="M993.500 263.500v-12h10.500l1.500-4h6l1.500 1.500v4" fill="#f7e6c8" stroke="#e9c17f" stroke-width="1"/>
<path d="M993 264l2.800-10.500h20.200l-2.800 10.500z" fill="#eac282"/>
<rect x="1001.900" y="254.500" width="12" height="12" fill="#fff" stroke="#6b6b6b" stroke-width="1"/>
<circle cx="1004.600" cy="257.500" r="1.300" fill="#eac282"/>
<path d="M1002.400 266v-2.500l3-3 1.500 1.300 2.700-2.800 3.800 3.800v3.200z" fill="#4582c3"/>
<!-- navigator -->
<circle cx="1003.900" cy="292" r="9.400" fill="#fff" stroke="#7a7a7a" stroke-width="1"/>
<path d="M1009.500 286.500l-3 8-8 3 3-8z" fill="#4582c3"/>
<circle cx="1003.900" cy="292" r="1.500" fill="#fff"/>
<!-- functions -->
<text x="995.200" y="337.200" font-size="27" font-weight="bold" font-style="italic" fill="#4582c3" textLength="9" lengthAdjust="spacingAndGlyphs">f</text>
<text x="1004.600" y="337.200" font-size="19" font-weight="bold" font-style="italic" fill="#4582c3" textLength="8.800" lengthAdjust="spacingAndGlyphs">x</text>
</svg>
<div id="taskbar" class="abs" style="left:0;top:728px;width:1024px;height:40px;background:#050a15"></div>
<div class="abs" style="left:149px;top:728px;width:48px;height:40px;background:#333944"></div>
<div class="abs" style="left:149px;top:765px;width:48px;height:3px;background:#76b9ed"></div>
<div class="abs" style="left:1019px;top:728px;width:1px;height:40px;background:#6a6e76"></div>
<svg style="left:0;top:728px" width="200" height="40" viewBox="0 728 200 40">
<!-- windows logo -->
<path d="M15.500 742.300l6.700-0.950v6.450h-6.700zM23 741.250l9-1.250v7.800h-9zM15.500 748.600h6.700v6.450l-6.700-0.950zM23 748.600h9v7.800l-9-1.250z" fill="#fff"/>
<!-- explorer -->
<path d="M64 740.500a1 1 0 0 1 1-1h6.500l2 2h11a1 1 0 0 1 1 1v2h-21.500z" fill="#e9a825"/>
<rect x="64" y="742.300" width="21.500" height="14.700" rx="0.800" fill="#fcd667"/>
<rect x="64" y="743.800" width="21.500" height="2" fill="#fbe7a0"/>
<path d="M68.500 757v-6.500a1 1 0 0 1 1-1h10.500a1 1 0 0 1 1 1v6.500h-3.200v-4h-6.100v4z" fill="#2e8fe6"/>
<!-- chrome -->
<circle cx="124" cy="748" r="11.500" fill="#fff"/>
<path d="M124 736.500a11.500 11.500 0 0 1 9.960 5.750h-9.960a5.750 5.750 0 0 0-4.980 2.880l-4.980-2.880a11.500 11.500 0 0 1 9.960-5.750z" fill="#db4437"/>
<path d="M114.040 742.250l4.980 8.630a5.750 5.750 0 0 0 4.980 2.870l-2.500 5.600a11.500 11.500 0 0 1-7.460-17.100z" fill="#0f9d58"/>
<path d="M133.960 742.250a11.500 11.500 0 0 1-12.460 17.100l4.980-8.630a5.750 5.750 0 0 0 0-5.600l-2.480-2.870z" fill="#ffcd40"/>
<path d="M114.040 742.250a11.500 11.500 0 0 1 19.920 0h-9.960a5.750 5.750 0 0 0-4.980 2.880z" fill="#db4437"/>
<circle cx="124" cy="748" r="5.200" fill="#fff"/>
<circle cx="124" cy="748" r="4.200" fill="#4285f4"/>
<!-- calc -->
<path d="M165 736.700h9l8 7v14.300a1 1 0 0 1-1 1h-16a1 1 0 0 1-1-1v-20.300a1 1 0 0 1 1-1z" fill="#fff" stroke="#22b30b" stroke-width="1.800"/>
<path d="M176.900 735.800h6v6z" fill="#22b30b"/>
<rect x="167.500" y="745.900" width="11" height="9.400" fill="#fff" stroke="#22b30b" stroke-width="1"/>
<path d="M167.500 748.300h11M167.500 750.700h11M167.500 753h6M173.500 745.900v9.400" stroke="#22b30b" stroke-width="0.900" fill="none"/>
<rect x="173.500" y="751" width="5" height="4.300" fill="#22b30b"/>
<path d="M175 754.500v-1.500h1v-1h1.500v2.500z" fill="#fff"/>
</svg>
</body>
</html>
